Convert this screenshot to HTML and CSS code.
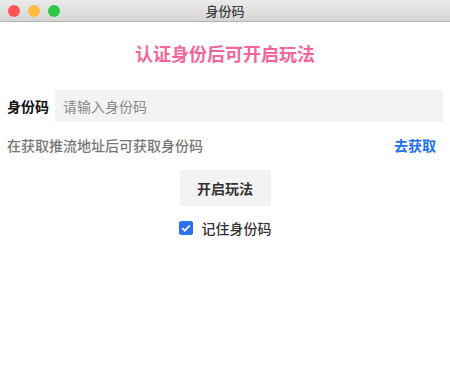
FILE: index.html
```html
<!DOCTYPE html>
<html lang="zh-CN">
<head>
    <meta charset="UTF-8">
    <title>身份码</title>
    <link rel="stylesheet" href="styles.css">
</head>
<body>
    <div class="titlebar">
        <div class="lights">
            <span class="light red"></span>
            <span class="light yellow"></span>
            <span class="light green"></span>
        </div>
        <div class="wintitle">身份码</div>
    </div>
    <div class="main">
        <h1 class="heading">认证身份后可开启玩法</h1>
        <div class="row">
            <label class="label">身份码</label>
            <input class="input" type="text" placeholder="请输入身份码">
        </div>
        <div class="hint">
            <span>在获取推流地址后可获取身份码</span>
            <a class="link">去获取</a>
        </div>
        <div class="actions">
            <button class="btn">开启玩法</button>
        </div>
        <div class="remember">
            <span class="check">
                <svg width="14" height="14" viewBox="0 0 14 14"><path d="M3.2 7.2 L5.8 9.7 L10.8 4.5" fill="none" stroke="#fff" stroke-width="1.7"/></svg>
            </span>
            <span>记住身份码</span>
        </div>
    </div>
</body>
</html>
```

FILE: styles.css
```css
body { margin: 0; font-family: "Noto Sans CJK SC", "Noto Sans", sans-serif; background: #fff; }
.titlebar { position: relative; height: 21px; background: linear-gradient(#ebebeb, #d5d5d5); border-bottom: 1px solid #b4b4b4; display: flex; align-items: center; justify-content: center; }
.lights { position: absolute; left: 8px; top: 5px; display: flex; gap: 8px; }
.light { width: 12px; height: 12px; border-radius: 50%; display: block; }
.red { background: #fc5753; }
.yellow { background: #fdbc40; }
.green { background: #33c748; }
.wintitle { font-size: 13px; color: #3f3f3f; line-height: 21px; font-weight: 500; }
.main { padding: 0 7px; }
.heading { margin: 0; padding-top: 19px; height: 48px; box-sizing: border-box; text-align: center; font-size: 18px; line-height: 24px; color: #f4669b; font-weight: bold; }
.row { display: flex; align-items: center; margin-top: 20px; }
.label { width: 48px; font-size: 14px; font-weight: bold; color: #111; }
.input { flex: 1; height: 32px; box-sizing: border-box; border: none; background: #f3f3f3; padding: 0 8px; font-size: 14px; font-family: inherit; outline: none; }
.input::placeholder { color: #888; }
.hint { display: flex; justify-content: space-between; margin-top: 13px; padding-right: 7px; font-size: 14px; line-height: 20px; color: #767676; font-weight: 500; }
.link { color: #1c6ef2; font-weight: bold; }
.actions { display: flex; justify-content: center; margin-top: 15px; }
.btn { width: 91px; height: 36px; border: none; background: #f3f3f3; font-size: 14px; font-family: inherit; font-weight: bold; color: #333; }
.remember { display: flex; justify-content: center; align-items: center; gap: 9px; margin-top: 13px; font-size: 14px; line-height: 18px; color: #333; font-weight: 500; }
.check { flex-shrink: 0; width: 14px; height: 14px; background: #2c6ff0; border-radius: 2px; display: flex; }
```
